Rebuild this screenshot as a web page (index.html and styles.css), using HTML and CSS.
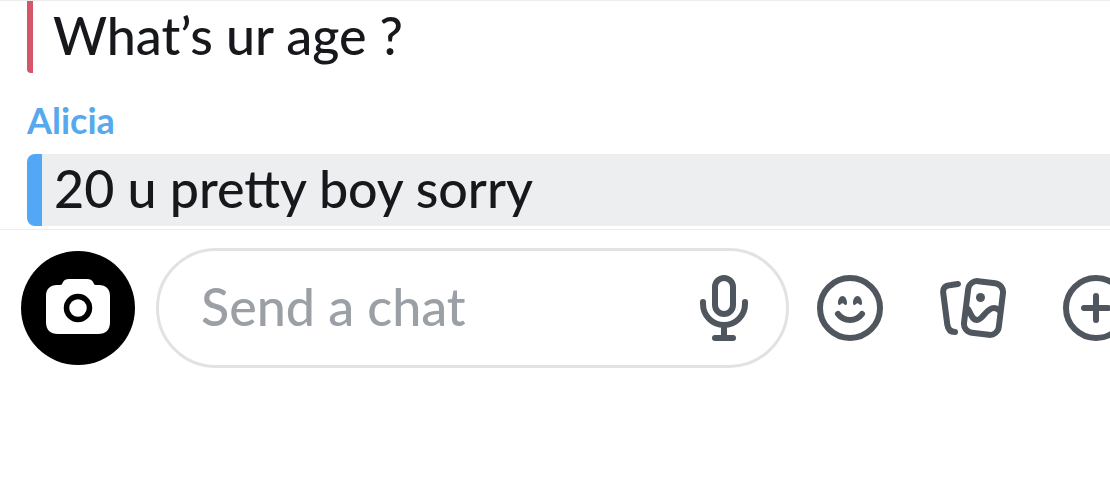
FILE: index.html
```html
<!DOCTYPE html>
<html lang="en">
<head>
    <meta charset="UTF-8">
    <meta name="viewport" content="width=device-width, initial-scale=1.0">
    <title>Chat</title>
    <link rel="stylesheet" href="styles.css">
</head>
<body>

    <!-- Messages -->
    <main class="messages">
        <div class="message message-me">What’s ur age ?</div>
        <h2 class="sender">Alicia</h2>
        <div class="message message-friend">20 u pretty boy sorry</div>
    </main>

    <!-- Chat bar -->
    <form class="chat-bar">
        <button type="button" class="camera-button" aria-label="Camera">
            <svg viewBox="0 0 114 114">
                <path fill="#fff" d="M36 34h3c2 0 2-1 3-3 1-2 3-3 6-3h18c3 0 5 1 6 3 1 2 1 3 3 3h3c7 0 11 4 11 11v26c0 8-4 12-12 12H37c-8 0-12-4-12-12V45c0-7 4-11 11-11z"/>
                <circle cx="57" cy="57" r="11.5" fill="none" stroke="#000" stroke-width="5.5"/>
            </svg>
        </button>

        <div class="chat-field">
            <input type="text" class="chat-input" placeholder="Send a chat" aria-label="Send a chat">
            <button type="button" class="icon-button" aria-label="Voice note">
                <svg class="icon" viewBox="0 0 66 66">
                    <rect x="24" y="3" width="18" height="36" rx="9"/>
                    <path d="M12 27v2a21 21 0 0 0 42 0v-2M33 50v13M24 63h18"/>
                </svg>
            </button>
        </div>

        <div class="chat-actions">
            <button type="button" class="icon-button" aria-label="Stickers">
                <svg class="icon" viewBox="0 0 66 66">
                    <circle cx="33" cy="33" r="30"/>
                    <path d="M21 39c6 8 18 8 24 0"/>
                    <path class="solid" d="M21 28c0-4 2-7 4.5-7s4.500 3 4.500 7c0 2.500-2 2.500-3 1-.8-1-2.200-1-3 0-1 1.500-3 1.500-3-1zM36 28c0-4 2-7 4.500-7s4.500 3 4.500 7c0 2.500-2 2.500-3 1-.8-1-2.200-1-3 0-1 1.500-3 1.500-3-1z"/>
                </svg>
            </button>
            <button type="button" class="icon-button" aria-label="Memories">
                <svg class="icon" viewBox="0 0 66 66">
                    <path d="M18 9l-7 1c-6 .6-8.500 3-7.700 8.500l4 31c.7 5 3 7.500 7.700 7.500"/>
                    <rect x="26" y="7" width="35" height="52" rx="9" transform="rotate(7 43.5 33)"/>
                    <path d="M27 33c3 2 4 12 10 12 6 0 9-12 17-12 2 0 4 1 6 3"/>
                    <circle class="solid" cx="40.5" cy="22.5" r="4.5"/>
                </svg>
            </button>
            <button type="button" class="icon-button" aria-label="More">
                <svg class="icon" viewBox="0 0 66 66">
                    <circle cx="33" cy="33" r="30"/>
                    <path d="M33 21v24M21 33h24"/>
                </svg>
            </button>
        </div>
    </form>

</body>
</html>
```
FILE: styles.css
```css
* {
    box-sizing: border-box;
}

body {
    margin: 0;
    font-family: 'Lato', sans-serif;
    font-size: 52px;
    font-weight: 500;
    color: #16181c;
    background-color: #fff;
    overflow: hidden;
}

button {
    padding: 0;
    border: none;
    background: none;
    cursor: pointer;
}

svg {
    display: block;
    width: 100%;
}

/* Messages */
.messages {
    padding: 0 0 3px 27px;
    border-top: 1px solid #ececec;
    border-bottom: 1px solid #ececec;
}

.message {
    line-height: 68px;
    padding: 0 0 4px 20px;
}

.message-me {
    border-left: 6px solid #d35768;
    border-bottom-left-radius: 4px;
}

.sender {
    margin: 25px 0 12px;
    font-size: 36px;
    line-height: 44px;
    font-weight: 700;
    color: #56a9ee;
}

.message-friend {
    padding-left: 12px;
    background-color: #edeef0;
    border-left: 15px solid #52a8f5;
    border-radius: 8px 0 0 8px;
}

/* Chat bar */
.chat-bar {
    display: flex;
    align-items: center;
    margin-right: -19px; /* Last icon runs off the screen */
    padding: 18px 0 18px 21px;
}

.camera-button {
    flex: none;
    width: 114px;
    height: 114px;
    margin-right: 21px;
    border-radius: 50%;
    background-color: #000;
}

.chat-field {
    flex: 1;
    display: flex;
    align-items: center;
    min-width: 0;
    height: 120px;
    padding: 0 29px 0 42px;
    border: 3px solid #e1e2e4;
    border-radius: 60px;
}

.chat-input {
    flex: 1;
    min-width: 0;
    padding: 0 0 4px;
    border: none;
    outline: none;
    background: none;
    font: inherit;
    color: inherit;
}

.chat-input::placeholder {
    color: #9b9fa6;
    opacity: 1;
}

.chat-actions {
    display: flex;
    gap: 57px;
    margin-left: 28px;
}

.icon-button {
    flex: none;
    width: 66px;
    height: 66px;
}

.icon {
    fill: none;
    stroke: #50565e;
    stroke-width: 6;
    stroke-linecap: round;
    stroke-linejoin: round;
}

.icon .solid {
    fill: #50565e;
    stroke: none;
}
```
